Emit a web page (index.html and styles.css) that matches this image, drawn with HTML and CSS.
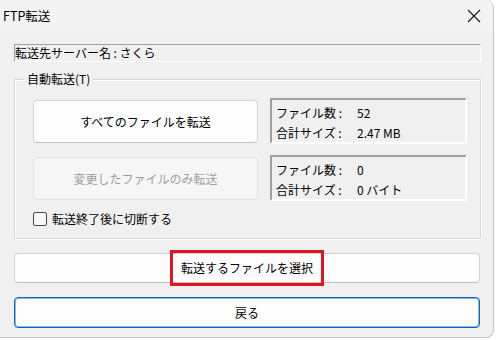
FILE: index.html
```html
<!DOCTYPE html>
<html lang="ja">
<head>
<meta charset="utf-8">
<title>FTP転送</title>
<link rel="stylesheet" href="styles.css">
</head>
<body>
<div class="dialog">
  <div class="titlebar">
    <span class="title">FTP転送</span>
    <span class="close" aria-label="閉じる">
      <svg width="14" height="14" viewBox="0 0 14 14"><path d="M1 1 L13 13 M13 1 L1 13" stroke="#1a1a1a" stroke-width="1.2" fill="none"/></svg>
    </span>
  </div>
  <div class="content">
    <div class="server">転送先サーバー名 : さくら</div>
    <div class="group">
      <div class="group-label">自動転送(T)</div>
      <div class="grid">
        <button class="btn btn-big">すべてのファイルを転送</button>
        <div class="info">
          <span>ファイル数 :</span><span>52</span>
          <span>合計サイズ :</span><span>2.47 MB</span>
        </div>
        <button class="btn btn-big" disabled>変更したファイルのみ転送</button>
        <div class="info">
          <span>ファイル数 :</span><span>0</span>
          <span>合計サイズ :</span><span>0 バイト</span>
        </div>
      </div>
      <label class="check"><span class="box"></span>転送終了後に切断する</label>
    </div>
    <button class="btn btn-wide"><span class="mark">転送するファイルを選択</span></button>
    <button class="btn btn-wide btn-default">戻る</button>
  </div>
</div>
</body>
</html>
```
FILE: styles.css
```css
html, body {
  margin: 0;
  padding: 0;
  background: #ffffff;
}
body {
  font-family: "Noto Sans CJK JP", "Noto Sans", sans-serif;
  font-size: 12px;
  color: #000;
}
.dialog {
  width: 494px;
  height: 338px;
  box-sizing: border-box;
  background: #f0f0f0;
  border: 1px solid #c4c4c4;
  border-left: none;
  border-top: none;
  border-radius: 0 8px 8px 0;
  display: flex;
  flex-direction: column;
}
.titlebar {
  height: 32px;
  display: flex;
  align-items: center;
  justify-content: space-between;
  padding: 0 12px 0 3px;
  background: #f3f3f3;
  border-radius: 0 8px 0 0;
}
.title {
  font-size: 12.5px;
  line-height: 16px;
}
.close {
  display: flex;
  width: 14px;
  height: 14px;
}
.content {
  padding: 0 12px 0 14px;
  display: flex;
  flex-direction: column;
}
.server {
  margin-top: 12px;
  height: 18px;
  box-sizing: border-box;
  line-height: 16px;
  border: 1px solid;
  border-color: #a0a0a0 #ffffff #ffffff #a0a0a0;
  white-space: nowrap;
}
.group {
  margin-top: 17px;
  border: 1px solid #d5d5d5;
  box-shadow: 1px 1px 0 #ffffff, inset 1px 1px 0 #ffffff;
  padding: 0 13px 11px 18px;
  display: flex;
  flex-direction: column;
}
.group-label {
  margin: -9px 0 0 -9px;
  padding: 0 3px;
  background: #f0f0f0;
  width: max-content;
  line-height: 16px;
}
.grid {
  margin-top: 11px;
  display: grid;
  grid-template-columns: 225px 197px;
  grid-auto-rows: 46px;
  column-gap: 12px;
  row-gap: 11px;
  align-items: center;
}
.btn {
  font: inherit;
  color: #000;
  background: #fdfdfd;
  border: 1px solid #d3d3d3;
  border-bottom-color: #c2c2c2;
  border-radius: 4px;
  padding: 0;
  margin: 0;
}
.btn-big {
  height: 43px;
}
.btn:disabled {
  background: #f6f6f6;
  border-color: #e2e2e2;
  color: #9d9d9d;
}
.info {
  height: 46px;
  box-sizing: border-box;
  border: 2px solid;
  border-color: #a0a0a0 #ffffff #ffffff #a0a0a0;
  padding: 3px 0 0 4px;
  display: grid;
  grid-template-columns: 81px auto;
  grid-auto-rows: 20px;
  align-content: start;
  line-height: 20px;
}
.check {
  margin-top: 10px;
  display: flex;
  align-items: center;
  gap: 5px;
  line-height: 16px;
  height: 16px;
}
.box {
  width: 14px;
  height: 14px;
  box-sizing: border-box;
  border: 1px solid #4a4a4a;
  border-radius: 2px;
  background: #f7f7f7;
}
.btn-wide {
  margin-top: 14px;
  height: 30px;
  width: 466px;
  line-height: 16px;
}
.btn-default {
  height: 31px;
  border: 1px solid #0a64c4;
  box-shadow: inset 0 0 0 1px #8cb9e6;
}
.mark {
  display: inline-block;
  padding: 0 1px;
  line-height: 16px;
  outline: 3px solid #e4141e;
  outline-offset: 7px;
}
```
